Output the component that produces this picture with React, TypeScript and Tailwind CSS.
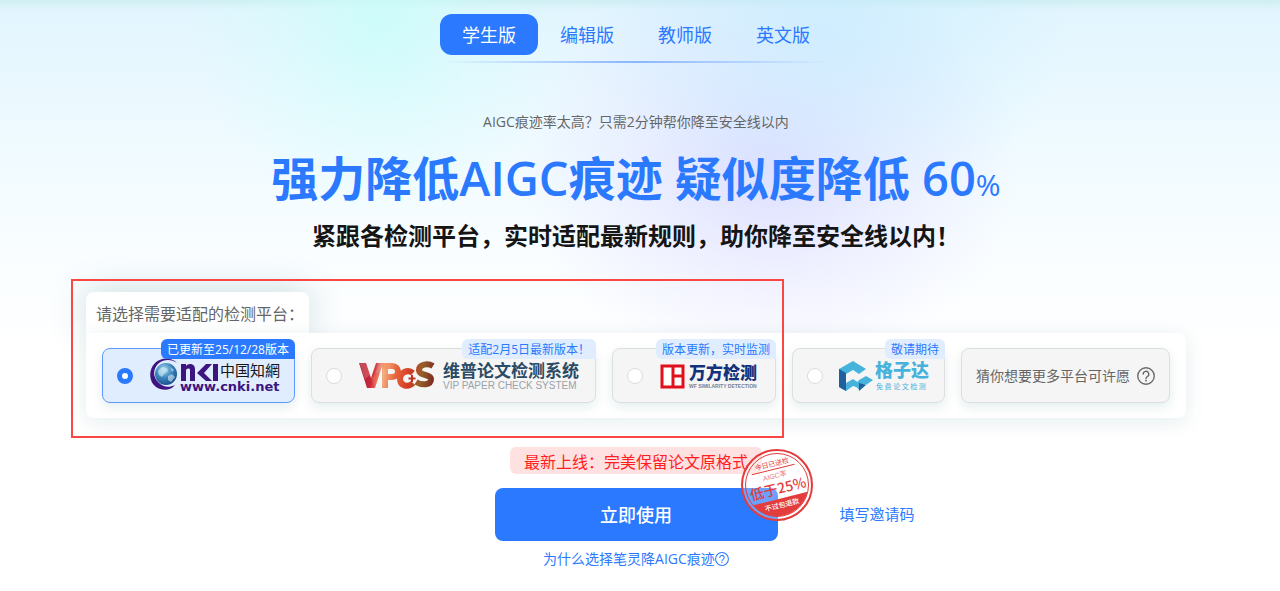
import { useState } from "react";
import clsx from "clsx";

const tabs = ["学生版", "编辑版", "教师版", "英文版"];

const CJK = '"Noto Sans CJK SC", sans-serif';

function QuestionIcon({ className }: { className?: string }) {
  return (
    <svg className={className} viewBox="0 0 24 24" fill="none" stroke="currentColor" strokeWidth="1.8" aria-hidden>
      <circle cx="12" cy="12" r="11" />
      <path d="M8.300 9.500a3.700 3.700 0 1 1 5.500 3.200c-1.300.8-1.800 1.300-1.800 2.800" strokeLinecap="round" />
      <circle cx="12" cy="18.200" r="1.200" fill="currentColor" stroke="none" />
    </svg>
  );
}

function CnkiLogo() {
  return (
    <svg width="131" height="40" viewBox="0 0 131 40" role="img" aria-label="中国知网" overflow="visible">
      <defs>
        <radialGradient id="globe" cx="0.4" cy="0.3" r="0.75">
          <stop offset="0" stopColor="#a9daf0" />
          <stop offset="0.5" stopColor="#3c86bd" />
          <stop offset="1" stopColor="#174a86" />
        </radialGradient>
      </defs>
      <circle cx="17" cy="18" r="11" fill="url(#globe)" />
      <path d="M9 15l4-4 5 1 1 3-4 3-2 3-3-2zM19 20l4-2 3 3-4 5-3-2zM21 11l4 3-2 2z" fill="#d5edf7" opacity="0.6" />
      <path
        d="M28 7C23 1 12 1 6 7-1 14 0 26 7 31c6 4 14 4 19-2-6 3-12 2-16-2C3 21 4 12 10 7c5-4 13-4 18 0z"
        fill="#3d1480"
      />
      <path d="M32 25V8h5v2c2-3 9-3 9 3v12h-5V14c0-2-4-2-4 1v10z" fill="#3d1480" />
      <path d="M57 8h6l-8 9 8 8h-6l-9-8zM64 8h5v17h-5z" fill="#3d1480" />
      <text x="71" y="20" fontSize="15" fill="#161616" fontFamily={CJK}>
        中国知網
      </text>
      <text x="31" y="35" fontSize="13" fill="#3d1480" fontFamily='"DejaVu Sans", sans-serif' fontWeight="700">
        www.cnki.net
      </text>
    </svg>
  );
}

function VipLogo() {
  return (
    <svg width="223" height="40" viewBox="0 0 223 40" role="img" aria-label="维普论文检测系统">
      <defs>
        <linearGradient id="vip" gradientUnits="userSpaceOnUse" x1="2" y1="10" x2="76" y2="24">
          <stop offset="0" stopColor="#a81f35" />
          <stop offset="0.18" stopColor="#c9283c" />
          <stop offset="0.32" stopColor="#f3b184" />
          <stop offset="0.48" stopColor="#e8663c" />
          <stop offset="0.68" stopColor="#d23a22" />
          <stop offset="0.82" stopColor="#94602a" />
          <stop offset="1" stopColor="#7c2a20" />
        </linearGradient>
      </defs>
      <path d="M1 7h7l5 15 5-15h7l-8 25H9z" fill="url(#vip)" />
      <g fill="none" stroke="url(#vip)" strokeWidth="6">
        <path d="M27 32V10h7c8 0 8 11 0 11h-5" />
        <path d="M55 17c-5-4-13-1-13 6s8 9 13 4" />
        <path d="M75 10c-5-3-14-2-14 4 0 6 12 4 12 9 0 7-10 6-15 3" />
      </g>
      <path d="M1 7l7 0 4 12-5 4zM17 18l4-11h4l-3 9z" fill="#f7b7a5" opacity="0.28" />
      <path d="M17 31l-4-9 6-5 2 3zM24 7h8l-5 8z" fill="#ff7a3c" opacity="0.35" />
      <path d="M54 19v7M50.500 22.500h7" stroke="#c2301f" strokeWidth="2" />
      <text x="85" y="21" fontSize="17" fontWeight="700" fill="#2b4a66" fontFamily={CJK}>
        维普论文检测系统
      </text>
      <text x="85" y="33" fontSize="10" fill="#9aa2ab" fontFamily='"Liberation Sans", sans-serif'>
        VIP PAPER CHECK SYSTEM
      </text>
    </svg>
  );
}

function WanfangLogo() {
  return (
    <svg width="102" height="40" viewBox="0 0 102 40" role="img" aria-label="万方检测" overflow="visible">
      <path d="M3 10h21v21H3zM14 10v21M14 20h10" fill="#fff" stroke="#e0101d" strokeWidth="3" />
      <text x="30" y="23" fontSize="17" fontWeight="900" fill="#14327c" fontFamily={CJK}>
        万方检测
      </text>
      <text x="30" y="32" fontSize="5" fontWeight="700" fill="#7b818c" fontFamily='"Liberation Sans", sans-serif'>
        WF SIMILARITY DETECTION
      </text>
    </svg>
  );
}

function GezidaLogo() {
  return (
    <svg width="91" height="40" viewBox="0 0 91 40" role="img" aria-label="格子达">
      <path d="M0 13L14 5l13 8-7 5-6-4-7 4v9l7-4 6 4v5l-6-2-7 5-7-4z" fill="#46b3dd" />
      <path d="M0 13l7 4v18l-7-4z" fill="#215f9e" />
      <path d="M20 24l7-4 7 4-7 5v-1l-7 6-4-5z" fill="#46b3dd" />
      <path d="M20 27l7 2-7 6z" fill="#215f9e" />
      <text x="36" y="21" fontSize="18" fontWeight="900" fill="#46b3dd" fontFamily={CJK}>
        格子达
      </text>
      <text x="37" y="33" fontSize="7" fill="#46b3dd" fontFamily={CJK}>
        免 费 论 文 检 测
      </text>
    </svg>
  );
}

function Stamp() {
  return (
    <svg
      className="pointer-events-none absolute -top-10 -right-9"
      width="74"
      height="74"
      viewBox="-37 -37 74 74"
      textAnchor="middle"
      fill="#e23c3c"
      fontFamily={`"Liberation Sans", ${CJK}`}
    >
      <circle r="35" fill="#fff" fillOpacity="0.3" stroke="#e23c3c" strokeWidth="2" />
      <circle r="31.500" fill="none" stroke="#e23c3c" />
      <g transform="rotate(-14)">
        <path d="M-28 14h56A31.500 31.500 0 0 1-28 14z" />
        <path d="M-22-16h44" stroke="#e23c3c" />
        <text y="-19" fontSize="7">今日已送检</text>
        <text y="-7" fontSize="7" opacity="0.7">AIGC率</text>
        <text y="9" fontSize="14" fontWeight="500" fontFamily={CJK}>低于25%</text>
        <text y="23" fontSize="7" fill="#fff" fontWeight="500">不过包退款</text>
      </g>
    </svg>
  );
}

const platforms = [
  { id: "cnki", badge: "已更新至25/12/28版本", Logo: CnkiLogo },
  { id: "vip", badge: "适配2月5日最新版本！", Logo: VipLogo },
  { id: "wanfang", badge: "版本更新，实时监测", Logo: WanfangLogo },
  { id: "gezida", badge: "敬请期待", Logo: GezidaLogo },
];

export default function App() {
  const [tab, setTab] = useState(tabs[0]);
  const [platform, setPlatform] = useState("cnki");

  return (
    <main className="min-h-screen bg-white bg-[radial-gradient(ellipse_190px_200px_at_380px_20px,#c8fefacc,#ccfefa55_50%,#ccfefa00),radial-gradient(ellipse_240px_180px_at_830px_30px,#c2ecff99,#c2ecff44_55%,#c2ecff00),radial-gradient(ellipse_250px_210px_at_770px_165px,#d9d8ffcc,#dedcff66_50%,#dedcff00),linear-gradient(#cfeef2,#e2f5fe_10px,#eefaff_130px,#f8fdff_240px,#ffffff_350px)] pr-2 font-['Open_Sans','Noto_Sans_CJK_SC',sans-serif]">
      <div className="mx-auto flex w-full max-w-[1100px] flex-col items-center pt-[14px]">
        <nav className="flex">
          {tabs.map((name) => (
            <button
              key={name}
              onClick={() => setTab(name)}
              className={clsx(
                "h-[41px] w-[98px] rounded-xl text-lg",
                name === tab ? "bg-[#2b79ff] text-white" : "text-[#2b79ff]",
              )}
            >
              {name}
            </button>
          ))}
        </nav>
        <div className="mt-[6px] h-0.5 w-[392px] bg-linear-to-r from-transparent via-[#8ab6ff] to-transparent" />

        <p className="mt-12 text-sm leading-[22px] text-[#666]">
          AIGC痕迹率太高？只需2分钟帮你降至安全线以内
        </p>
        <h1 className="mt-[15px] text-[47px] leading-[60px] font-bold text-[#2b79ff]">
          强力降低<span className="font-semibold">AIGC</span>痕迹 疑似度降低{" "}
          <span className="font-semibold">60</span>
          <span className="text-[30px] font-normal">%</span>
        </h1>
        <h2 className="mt-[3px] text-2xl leading-9 font-bold text-[#151515]">
          紧跟各检测平台，实时适配最新规则，助你降至安全线以内！
        </h2>

        <section className="relative mt-[38px] w-full">
          <h3 className="w-[223px] rounded-t-lg bg-white pt-[3px] pl-[10px] text-base leading-[38px] whitespace-nowrap text-[#666] shadow-[0_0_36px_#0a5a6438]">
            请选择需要适配的检测平台：
          </h3>
          <div className="relative flex gap-4 rounded-r-lg rounded-bl-lg bg-white px-4 py-[15px] shadow-[0_4px_20px_#0a5a641c]">
            {platforms.map(({ id, badge, Logo }) => (
              <label
                key={id}
                className={clsx(
                  "relative flex h-[55px] items-center gap-4 rounded-lg border px-[14px] shadow-[0_4px_12px_#0a5a641c]",
                  id === platform ? "border-[#5c9aff] bg-[#e0edff]" : "border-[#dcdfe0] bg-[#f5f5f5]",
                )}
              >
                <input
                  type="radio"
                  name="platform"
                  checked={id === platform}
                  onChange={() => setPlatform(id)}
                  className="size-4 appearance-none rounded-full border border-[#dcdcdc] bg-white checked:border-5 checked:border-[#2b79ff]"
                />
                <Logo />
                <span
                  className={clsx(
                    "absolute -top-[10px] -right-px rounded-t-md rounded-bl-md px-[6px] pt-0.5 text-xs leading-[18px] whitespace-nowrap",
                    id === platform ? "bg-[#2b79ff] text-white" : "bg-[#e0edff] text-[#2b79ff]",
                  )}
                >
                  {badge}
                </span>
              </label>
            ))}
            <button className="flex h-[55px] flex-1 items-center justify-between rounded-lg border border-[#dcdfe0] bg-[#f5f5f5] px-[14px] text-sm whitespace-nowrap text-[#666] shadow-[0_4px_12px_#0a5a641c]">
              猜你想要更多平台可许愿
              <QuestionIcon className="size-[18px]" />
            </button>
          </div>
          <div className="pointer-events-none absolute -top-[13px] -bottom-[20px] -left-[15px] w-[713px] border-2 border-[#fb4646]" />
        </section>

        <p className="mt-[29px] rounded-md bg-[#ffe1e1] px-[14px] pt-[3px] text-base leading-6 text-[#ff1f1f]">
          最新上线：完美保留论文原格式
        </p>
        <div className="mt-[14px] grid w-full grid-cols-[1fr_auto_1fr] items-center">
          <div className="relative col-start-2">
            <button className="h-[53px] w-[283px] rounded-lg bg-[#2b79ff] text-lg font-medium text-white">
              立即使用
            </button>
            <Stamp />
          </div>
          <a href="#invite" className="justify-self-start pl-[62px] text-[15px] text-[#2b79ff]">
            填写邀请码
          </a>
        </div>
        <a href="#why" className="mt-2 flex items-center text-sm leading-5 text-[#2b79ff]">
          为什么选择笔灵降AIGC痕迹
          <QuestionIcon className="size-[14px]" />
        </a>
      </div>
    </main>
  );
}
